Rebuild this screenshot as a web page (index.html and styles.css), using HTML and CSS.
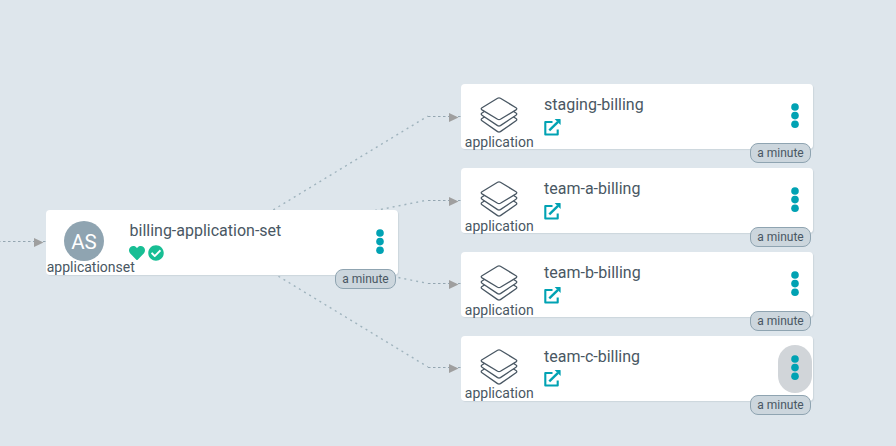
FILE: index.html
```
<!DOCTYPE html>
<html lang="en">
<head>
<meta charset="utf-8">
<title>Resource tree</title>
<link rel="stylesheet" href="styles.css">
</head>
<body>
<svg class="defs" width="0" height="0" aria-hidden="true">
  <symbol id="layers" viewBox="0 0 38 36">
    <g fill="#fff" stroke="#495763" stroke-width="1.3" stroke-linejoin="round">
      <path d="M2 21.5Q.4 22.7 2 23.8L17.6 34.6Q19 35.4 20.4 34.6L36 23.8Q37.6 22.7 36 21.5L20.4 11.700Q19 10.900 17.600 11.700Z"/>
      <path d="M2 16Q.4 17.100 2 18.200L17.600 28.600Q19 29.400 20.400 28.600L36 18.200Q37.600 17.100 36 16L20.400 6Q19 5.200 17.600 6Z"/>
      <path d="M2 10.700Q.4 11.800 2 12.900L17.600 22.300Q19 23.100 20.400 22.300L36 12.900Q37.600 11.800 36 10.700L20.400 1.300Q19 .5 17.600 1.300Z"/>
    </g>
  </symbol>
  <symbol id="external" viewBox="0 0 17 17">
    <path d="M8.500 3H1.300V15.500H13.700V10.500" fill="none" stroke="#00a2b3" stroke-width="2.100" stroke-linejoin="round"/>
    <path d="M5.300 11.300L14 2.800" fill="none" stroke="#00a2b3" stroke-width="2.400"/>
    <path d="M10.600 0H16Q16.600 0 16.600 .6V6Z" fill="#00a2b3"/>
  </symbol>
  <symbol id="dots" viewBox="0 0 8 26">
    <g fill="#00a2b3"><circle cx="4" cy="4" r="3.8"/><circle cx="4" cy="12.600" r="3.8"/><circle cx="4" cy="21.200" r="3.8"/></g>
  </symbol>
</svg>

<main class="canvas">
  <svg class="edges" width="896" height="446">
    <g class="edge">
      <path d="M-2 241.500H46"/>
      <path d="M428 116.500H461"/>
      <path d="M428 200.500H461"/>
      <path d="M428 283.500H461"/>
      <path d="M428 367.500H461"/>
    </g>
    <g class="edge edge-slope">
      <path d="M222 241L428 116"/>
      <path d="M222 241L428 200"/>
      <path d="M222 242L428 283.500"/>
      <path d="M222 242L428 367"/>
    </g>
    <g class="arrow">
      <path d="M34 238L43.500 242.500L34 247Z"/>
      <path d="M449 113L458.500 117.500L449 122Z"/>
      <path d="M449 197L458.500 201.500L449 206Z"/>
      <path d="M449 280L458.500 284.500L449 289Z"/>
      <path d="M449 364L458.500 368.500L449 373Z"/>
    </g>
  </svg>

  <article class="node node-set">
    <div class="kind"><span class="avatar">AS</span><span class="kind-name">applicationset</span></div>
    <div class="content">
      <div class="title">billing-application-set</div>
      <div class="status">
        <svg width="16" height="16" viewBox="0 0 512 512" fill="#18be94"><path d="M462.300 62.600C407.500 15.900 326 24.300 275.700 76.200L256 96.500l-19.700-20.300C186.100 24.300 104.500 15.900 49.700 62.600c-62.800 53.600-66.100 149.800-9.900 207.900l193.500 199.800c12.500 12.900 32.800 12.900 45.300 0l193.500-199.800c56.300-58.100 53-154.300-9.800-207.900z"/></svg>
        <svg width="16" height="16" viewBox="0 0 512 512" fill="#18be94"><path d="M504 256c0 137-111 248-248 248S8 393 8 256 119 8 256 8s248 111 248 248zM227.300 387.300l184-184c6.200-6.200 6.200-16.400 0-22.600l-22.600-22.600c-6.200-6.200-16.400-6.200-22.600 0L216 308.100l-70.100-70.100c-6.200-6.200-16.400-6.200-22.600 0l-22.600 22.600c-6.200 6.200-6.200 16.400 0 22.600l104 104c6.200 6.300 16.400 6.300 22.600.1z"/></svg>
      </div>
    </div>
    <div class="menu"><svg><use href="#dots"/></svg></div>
    <span class="age">a minute</span>
  </article>

  <article class="node node-staging">
    <div class="kind"><svg class="layers"><use href="#layers"/></svg><span class="kind-name">application</span></div>
    <div class="content"><div class="title">staging-billing</div><svg class="link"><use href="#external"/></svg></div>
    <div class="menu"><svg><use href="#dots"/></svg></div>
    <span class="age">a minute</span>
  </article>
  <article class="node node-a">
    <div class="kind"><svg class="layers"><use href="#layers"/></svg><span class="kind-name">application</span></div>
    <div class="content"><div class="title">team-a-billing</div><svg class="link"><use href="#external"/></svg></div>
    <div class="menu"><svg><use href="#dots"/></svg></div>
    <span class="age">a minute</span>
  </article>
  <article class="node node-b">
    <div class="kind"><svg class="layers"><use href="#layers"/></svg><span class="kind-name">application</span></div>
    <div class="content"><div class="title">team-b-billing</div><svg class="link"><use href="#external"/></svg></div>
    <div class="menu"><svg><use href="#dots"/></svg></div>
    <span class="age">a minute</span>
  </article>
  <article class="node node-c">
    <div class="kind"><svg class="layers"><use href="#layers"/></svg><span class="kind-name">application</span></div>
    <div class="content"><div class="title">team-c-billing</div><svg class="link"><use href="#external"/></svg></div>
    <div class="menu menu-active"><svg><use href="#dots"/></svg></div>
    <span class="age">a minute</span>
  </article>
</main>
</body>
</html>
```

FILE: styles.css
```
* { box-sizing: border-box; }
body {
  margin: 0;
  background: #dee6ec;
  color: #495763;
  font-family: Roboto, "Liberation Sans", sans-serif;
}
.defs { position: absolute; }
.canvas { position: relative; width: 896px; height: 446px; overflow: hidden; }
.edges { position: absolute; inset: 0; }
.edge { fill: none; stroke: #94a6b1; stroke-width: 1; stroke-dasharray: 2.500 2.500; }
.edge-slope { stroke: #9fb3bd; stroke-width: 1.400; stroke-dasharray: 2 4; }
.arrow { fill: #9f9f9f; }

/* Graph nodes */
.node {
  position: absolute;
  display: flex;
  width: 352px;
  height: 65px;
  background: #fff;
  border-radius: 4px;
  box-shadow: 1px 1px 1px #ccd6dd;
}
.node-set { left: 46px; top: 210px; }
.node-staging { left: 461px; top: 84px; }
.node-a { left: 461px; top: 168px; }
.node-b { left: 461px; top: 252px; }
.node-c { left: 461px; top: 336px; }

.kind {
  display: flex;
  flex-direction: column;
  align-items: center;
  width: 76px;
  padding-top: 11px;
}
.kind-name { font-size: 14px; line-height: 16px; white-space: nowrap; }
.node-set .kind-name { margin-left: 13.500px; }
.node:not(.node-set) .kind-name { margin-left: .5px; }
.avatar {
  flex-shrink: 0;
  width: 40px;
  height: 40px;
  margin-bottom: -2px;
  border-radius: 50%;
  background: #8fa4b1;
  color: #fff;
  font-size: 20.500px;
  line-height: 42px;
  text-align: center;
}
.layers { flex-shrink: 0; width: 38px; height: 36px; margin: 2px 0 1px; }
.node-c .layers { margin-bottom: 0; }
.content { flex: 1; padding: 11px 0 0 7px; }
.node-set .content { padding-left: 7.500px; }
.title { font-size: 16px; line-height: 20px; white-space: nowrap; }
.status { display: flex; gap: 2.500px; margin: 4px 0 0 -.2px; }
.link { display: block; width: 17px; height: 17px; margin-top: 4px; }
.node-c .link { margin-top: 3px; }

.menu {
  align-self: flex-start;
  width: 34px;
  height: 48px;
  margin: 9px 1px 0 0;
  padding: 10px 0 0 13.200px;
  border-radius: 17px;
}
.menu-active { background: #d1d5d9; }
.menu svg { display: block; width: 8px; height: 26px; }

.age {
  position: absolute;
  right: 2px;
  bottom: -14px;
  width: 61px;
  height: 20px;
  border: 1px solid #8fa4b1;
  border-radius: 8px;
  background: #ccd6dd;
  font-size: 12px;
  line-height: 18px;
  text-align: center;
  white-space: nowrap;
}
```
